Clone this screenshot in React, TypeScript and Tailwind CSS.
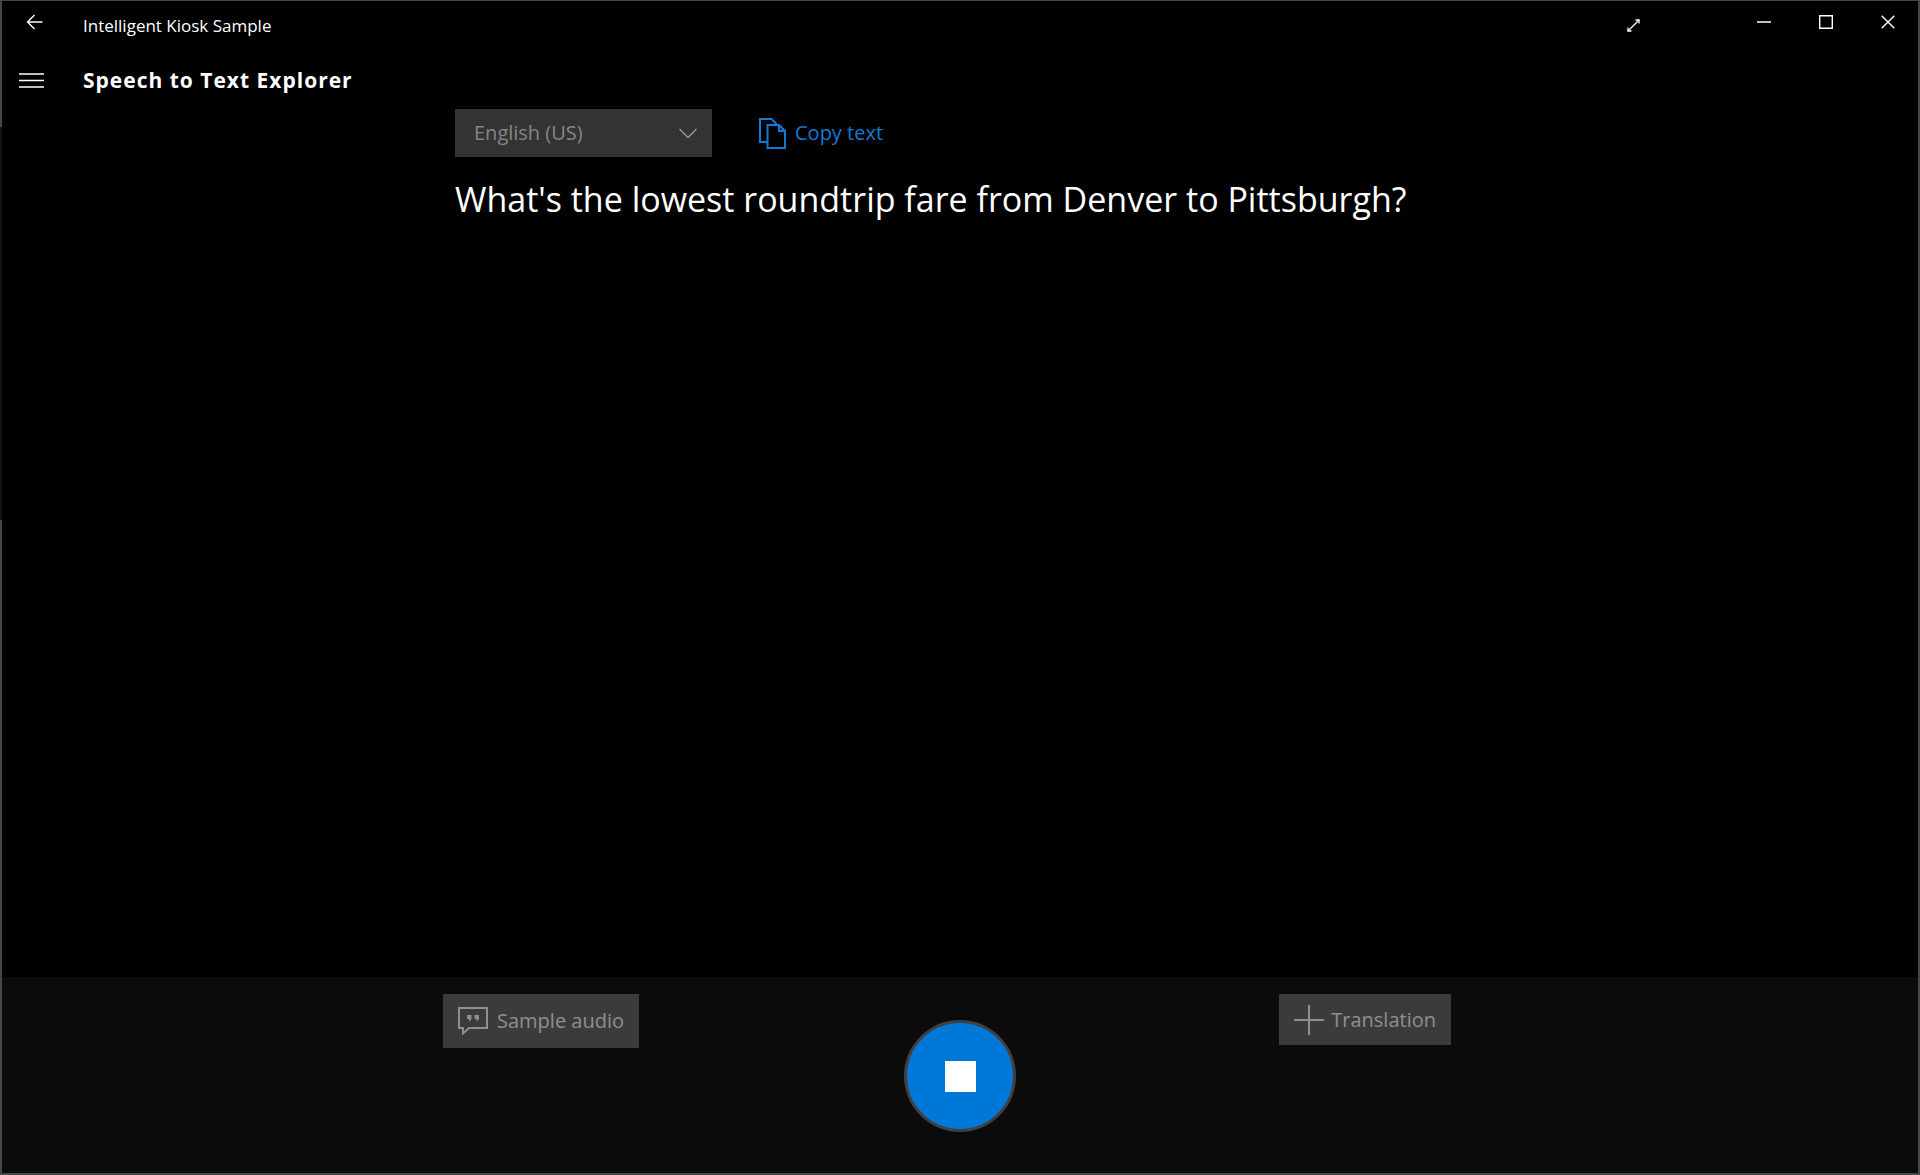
function TitleBar() {
  return (
    <header className="flex h-11 items-start justify-between text-white">
      <div className="flex">
        <button aria-label="Back" className="flex h-[42px] w-16 items-center justify-center">
          <svg width="17" height="16" viewBox="0 0 17 16" fill="none" stroke="currentColor" strokeWidth="1.4">
            <path d="M16.500 8H1.500M8.500 1L1.500 8l7 7" />
          </svg>
        </button>
        <span className="ml-[17px] mt-[13px] text-[17px] leading-6">Intelligent Kiosk Sample</span>
      </div>
      <div className="flex">
        <button aria-label="Enter full screen" className="mr-[68px] mt-[2px] flex h-11 w-16 items-center justify-center">
          <svg width="13" height="13" viewBox="0 0 13 13" fill="none" stroke="currentColor" strokeWidth="1.3">
            <path d="M1 12L12 1" />
            <path d="M8.500 1H12v3.500M1 8.500V12h3.500" />
          </svg>
        </button>
        <button aria-label="Minimize" className="flex h-[42px] w-[62px] items-center justify-center">
          <svg width="14" height="14" viewBox="0 0 14 14" fill="none" stroke="currentColor" strokeWidth="1.5">
            <path d="M0 7h14" />
          </svg>
        </button>
        <button aria-label="Maximize" className="flex h-[42px] w-[62px] items-center justify-center">
          <svg width="14" height="14" viewBox="0 0 14 14" fill="none" stroke="currentColor" strokeWidth="1.4">
            <path d="M.7 .7h12.600v12.600H.7z" />
          </svg>
        </button>
        <button aria-label="Close" className="flex h-[42px] w-[61px] items-center justify-center">
          <svg width="14" height="14" viewBox="0 0 14 14" fill="none" stroke="currentColor" strokeWidth="1.4">
            <path d="M.7 .7l12.600 12.600M13.300 .7L.7 13.300" />
          </svg>
        </button>
      </div>
    </header>
  );
}

function CopyIcon() {
  return (
    <svg width="28" height="31" viewBox="0 0 28 31" fill="none" stroke="currentColor" strokeWidth="2">
      <path d="M9 24H2V1h11.500l5 5" />
      <path d="M9.500 7h11.500L27 13V30H9.500zM21 7v6h6" />
    </svg>
  );
}

function QuoteBubbleIcon() {
  return (
    <svg width="30" height="28" viewBox="0 0 30 28" fill="none" stroke="currentColor" strokeWidth="2">
      <path d="M1 1h28v20H11l-6 5.500V21H1z" />
      <path
        d="M9 8h4.500v3.500q0 2-2.500 3v-2.500H9zM16.500 8H21v3.500q0 2-2.500 3v-2.500h-2z"
        fill="currentColor"
        stroke="none"
      />
    </svg>
  );
}

export default function App() {
  return (
    <div className={'relative flex min-h-screen flex-col border-2 border-t border-[#454747] bg-black font-["Open_Sans","Noto_Sans",sans-serif] text-white'}>
      <div className="absolute -left-0.5 top-[126px] h-[393px] w-0.5 bg-[#141414]" />
      <TitleBar />
      <div className="flex h-[70px] items-center">
        <button aria-label="Open navigation" className="flex h-[70px] w-[58px] items-center justify-center">
          <svg width="25" height="15" viewBox="0 0 25 15" fill="none" stroke="currentColor" strokeWidth="1.4">
            <path d="M0 1h25M0 7.500h25M0 14h25" />
          </svg>
        </button>
        <h1 className="ml-[23px] text-[21px] leading-7 font-bold tracking-[1px]">Speech to Text Explorer</h1>
      </div>

      <main className="mx-auto -mt-1.5 w-full max-w-[1010px] grow">
        <div className="flex items-center gap-[46px]">
          <div className="relative w-[257px]">
            <select
              aria-label="Spoken language"
              disabled
              className="h-12 w-full appearance-none bg-[#333333] px-[19px] text-[20px] text-[#858585] opacity-100"
            >
              <option>English (US)</option>
            </select>
            <svg
              className="pointer-events-none absolute top-[19px] right-[15px] text-[#9a9a9a]"
              width="18"
              height="11"
              viewBox="0 0 18 11"
              fill="none"
              stroke="currentColor"
              strokeWidth="1.3"
            >
              <path d="M.5 1L9 9.500 17.500 1" />
            </svg>
          </div>
          <button className="flex h-12 items-center gap-[9px] text-[20px] text-[#0f7bd6]">
            <CopyIcon />
            Copy text
          </button>
        </div>
        <p className="mt-4 text-[34px] leading-[52px]">What's the lowest roundtrip fare from Denver to Pittsburgh?</p>
      </main>

      <footer className="bg-[#0b0b0b]">
        <div className="mx-auto grid h-[196px] w-full max-w-[1034px] grid-cols-[1fr_auto_1fr] items-start pt-[17px]">
          <button
            disabled
            className="flex h-[54px] items-center gap-[9px] justify-self-start bg-[#3b3b3b] px-[15px] text-[20px] text-[#8f8f8f]"
          >
            <QuoteBubbleIcon />
            Sample audio
          </button>
          <button
            aria-label="Stop recording"
            className="mt-[26px] flex size-28 items-center justify-center rounded-full border-3 border-[#404040] bg-[#0078d7]"
          >
            <span className="size-[31px] bg-white" />
          </button>
          <button
            disabled
            className="mr-[26px] flex h-[51px] items-center gap-[7px] justify-self-end bg-[#3b3b3b] px-[15px] text-[20px] text-[#8f8f8f]"
          >
            <svg width="30" height="30" viewBox="0 0 30 30" fill="none" stroke="currentColor" strokeWidth="2">
              <path d="M0 15h30M15 0v30" />
            </svg>
            Translation
          </button>
        </div>
      </footer>
    </div>
  );
}
